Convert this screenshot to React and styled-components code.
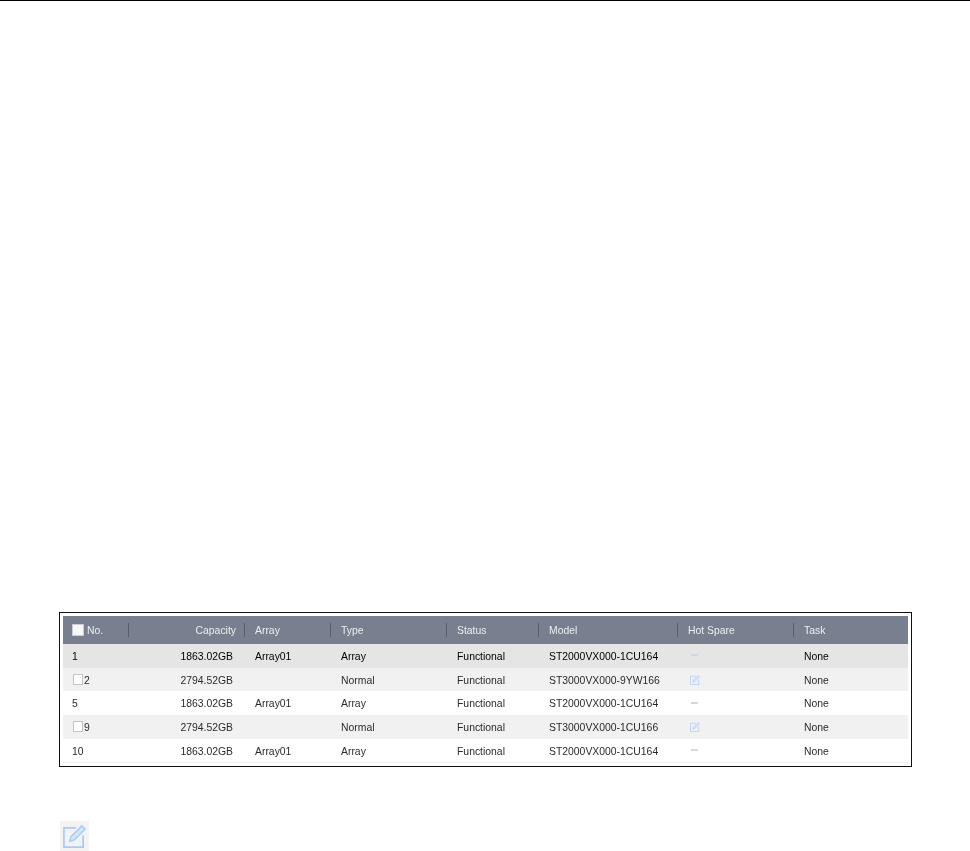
import styled, { createGlobalStyle } from 'styled-components';

const GlobalStyle = createGlobalStyle`
  html, body {
    margin: 0;
    padding: 0;
    background: #fff;
    font-family: "Liberation Sans", Arial, sans-serif;
  }
`;

const COLUMNS = '66px 116px 86px 116px 92px 139px 116px 114px';

const rows = [
  { no: '1', capacity: '1863.02GB', array: 'Array01', type: 'Array', model: 'ST2000VX000-1CU164', selected: true },
  { no: '2', capacity: '2794.52GB', array: '', type: 'Normal', model: 'ST3000VX000-9YW166', check: true, spare: true, striped: true },
  { no: '5', capacity: '1863.02GB', array: 'Array01', type: 'Array', model: 'ST2000VX000-1CU164' },
  { no: '9', capacity: '2794.52GB', array: '', type: 'Normal', model: 'ST3000VX000-1CU166', check: true, spare: true, striped: true },
  { no: '10', capacity: '1863.02GB', array: 'Array01', type: 'Array', model: 'ST2000VX000-1CU164' },
];

const EditIcon = ({ size }) => (
  <svg width={size} height={size} viewBox="0 0 24 24" fill="none">
    <path d="M13.5 3H1v20h20V11" stroke="#a9cbf5" strokeWidth="1.8" />
    <path d="M7 17l1.2-4.6L19.6 1 23 4.4 11.6 15.8z" fill="#d6e6fa" stroke="#a9cbf5" strokeWidth="1.6" />
  </svg>
);

const App = () => (
  <Page>
    <GlobalStyle />
    <Frame>
      <Table>
        <HeaderRow>
          <HeadCell>
            <HeadBox />
            No.
          </HeadCell>
          <HeadCell $right>Capacity</HeadCell>
          <HeadCell>Array</HeadCell>
          <HeadCell>Type</HeadCell>
          <HeadCell>Status</HeadCell>
          <HeadCell>Model</HeadCell>
          <HeadCell>Hot Spare</HeadCell>
          <HeadCell $last>Task</HeadCell>
        </HeaderRow>
        {rows.map((row) => (
          <Row key={row.no} $selected={row.selected} $striped={row.striped}>
            <NoCell>
              {row.check && <RowBox />}
              {row.no}
            </NoCell>
            <CapacityCell>{row.capacity}</CapacityCell>
            <Cell>{row.array}</Cell>
            <Cell>{row.type}</Cell>
            <Cell>Functional</Cell>
            <Cell>{row.model}</Cell>
            <SpareCell>{row.spare ? <EditIcon size={10} /> : <Dash />}</SpareCell>
            <Cell>None</Cell>
          </Row>
        ))}
      </Table>
    </Frame>
    <IconTile>
      <EditIcon size={23} />
    </IconTile>
  </Page>
);

export default App;

const Page = styled.div`
  width: 970px;
  height: 851px;
  box-sizing: border-box;
  border-top: 1px solid #000;
  padding: 611px 0 0 59px;
  overflow: hidden;
`;

const Frame = styled.div`
  width: 853px;
  height: 155px;
  box-sizing: border-box;
  border: 1px solid #111;
  padding: 3px 3px 0;
`;

const Table = styled.div`
  width: 845px;
  font-size: 10.4px;
  filter: blur(0.3px);
  border-bottom: 1px solid #f0f0f0;
`;

const HeaderRow = styled.div`
  display: grid;
  grid-template-columns: ${COLUMNS};
  height: 28px;
  background: #78808f;
  color: #eceef1;
`;

const HeadCell = styled.div`
  display: flex;
  align-items: center;
  justify-content: ${(p) => (p.$right ? 'flex-end' : 'flex-start')};
  padding: ${(p) => (p.$right ? '0 9px 0 0' : '0 0 0 10px')};
  position: relative;
  &:first-child {
    padding-left: 9px;
  }
  &::after {
    content: ${(p) => (p.$last ? 'none' : '""')};
    position: absolute;
    right: 0;
    top: 7px;
    height: 14px;
    width: 1px;
    background: #565e6c;
  }
`;

const HeadBox = styled.span`
  width: 12px;
  height: 12px;
  box-sizing: border-box;
  margin-right: 3px;
  background: #f8f8f8;
  border: 1px solid #c9ccd1;
`;

const Row = styled.div`
  display: grid;
  grid-template-columns: ${COLUMNS};
  height: 23.7px;
  align-items: center;
  padding-top: 1px;
  box-sizing: border-box;
  color: ${(p) => (p.$selected ? '#000' : '#2b2b2b')};
  background: ${(p) => (p.$selected ? '#e5e5e5' : p.$striped ? '#f1f1f1' : '#fff')};
`;

const Cell = styled.div`
  display: flex;
  align-items: center;
  padding-left: 10px;
  white-space: nowrap;
`;

const NoCell = styled(Cell)`
  padding-left: 9px;
`;

const CapacityCell = styled(Cell)`
  justify-content: flex-end;
  padding: 0 12px 0 0;
`;

const SpareCell = styled(Cell)`
  padding-left: 12px;
`;

const RowBox = styled.span`
  width: 10px;
  height: 11px;
  box-sizing: border-box;
  margin: -1px 1px 0 1px;
  background: #fff;
  border: 1px solid #c4c4c4;
`;

const Dash = styled.span`
  width: 7px;
  height: 2px;
  margin: 0 0 2px 1px;
  background: #d3d8de;
`;

const IconTile = styled.div`
  width: 29px;
  height: 30px;
  margin: 54px 0 0 1px;
  display: flex;
  align-items: center;
  justify-content: center;
  background: #f3f3f3;
`;
